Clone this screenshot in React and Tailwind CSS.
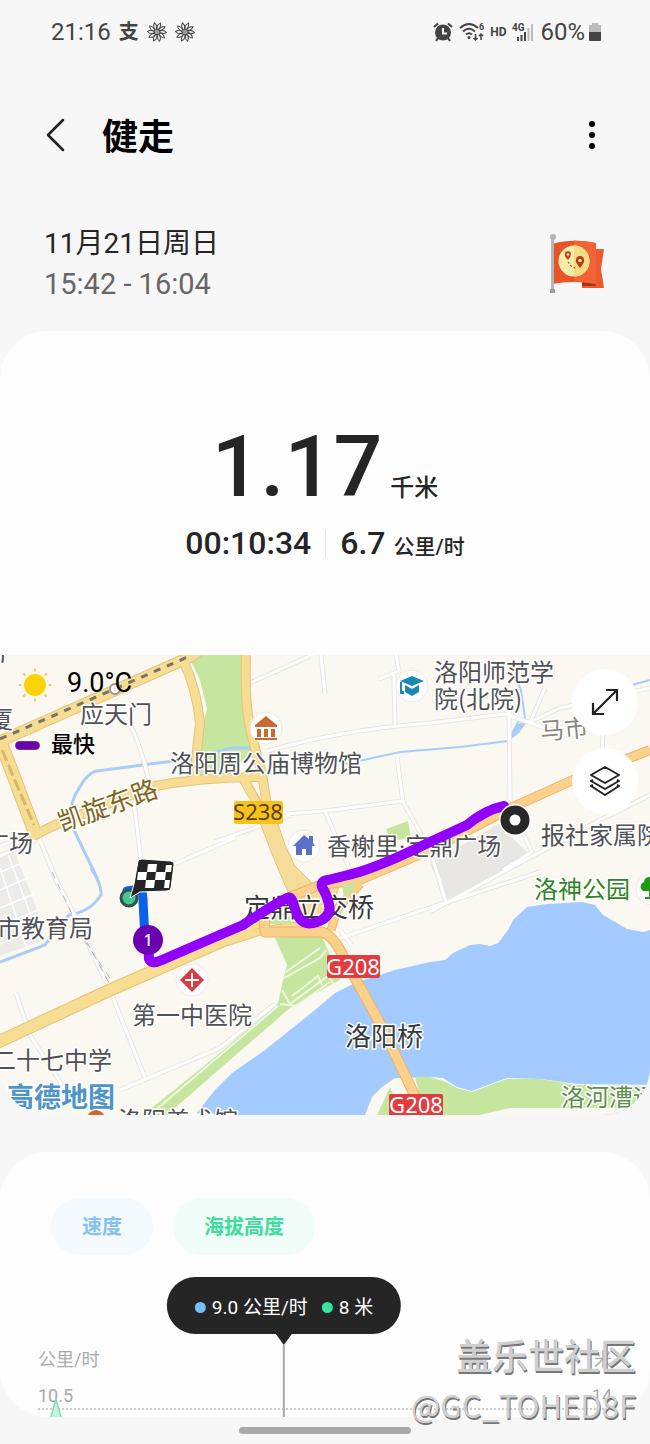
const ROADS_THIN = [
  'M120 706 L135 735 Q143 755 149 781 L134 803 Q138 835 141 862',
  'M39 838 L57 882 L70 906 L110 990 L145 1078',
  'M16 993 L30 1035 L62 1085',
  'M120 1090 L220 1048 L275 1004',
  'M250 683 L310 656',
  'M321 655 L325 694',
  'M396 655 L399 671 L379 679 M394 675 L395 726',
  'M268 751 Q340 730 430 723 L505 714 L545 728 L560 732',
  'M397 757 L403 802 L430 850 L446 902',
  'M286 814 L325 811 L402 801',
  'M325 811 L350 870',
  'M215 842 L290 815',
  'M509 712 L510 800',
  'M545 688 L529 725 M551 680 L553 667',
  'M530 722 L560 708 L580 704 L650 688',
  'M603 735 L602 755',
  'M430 912 L503 872 L600 820 L650 795',
  'M507 800 L532 852 L503 870',
  'M340 930 L352 946 M335 940 L420 911 L540 872',
  'M160 870 L235 838',
  'M0 846 L32 834 M0 856 L36 840',
]

const LABEL = "[font-family:'Noto_Sans_CJK_SC',sans-serif] [paint-order:stroke] stroke-white stroke-[3px] [stroke-linejoin:round]"

const PLACES = [
  { x: 80, y: 723, text: '应天门' },
  { x: -11, y: 728, text: '厦' },
  { x: 170, y: 772, text: '洛阳周公庙博物馆' },
  { x: 434, y: 681, text: '洛阳师范学' },
  { x: 434, y: 708, text: '院(北院)' },
  { x: 541, y: 844, text: '报社家属院' },
  { x: -15, y: 852, text: '广场' },
  { x: -3, y: 937, text: '市教育局' },
  { x: 132, y: 1024, text: '第一中医院' },
  { x: -8, y: 1069, text: '二十七中学' },
  { x: 118, y: 1129, text: '洛阳美术馆' },
]

function MapDrawing() {
  return (
    <svg viewBox="0 655 650 460" preserveAspectRatio="xMidYMid slice" className="block h-full w-full">
      <rect x="0" y="655" width="650" height="460" fill="#fbf8f2" />

      {/* building blocks */}
      <path d="M0 858 L14 850 L38 912 L44 940 L0 956Z" fill="#ecebe8" />
      <path d="M0 872 L20 864 M0 890 L28 878 M0 908 L34 894 M0 926 L38 910 M0 944 L42 926 M8 854 L40 940 M0 868 L26 946" stroke="#fff" strokeWidth="1.5" fill="none" />
      <path d="M430 864 L498 824 L528 853 L503 870 L446 901Z" fill="#e8e6e2" />

      {/* parks */}
      <g fill="#c6e6a0">
        <path d="M188 655 L241 655 Q242 690 249 735 L252 752 L228 775 L200 775 L202 728 L207 709 L200 680Z" />
        <path d="M386 829 L408 821 L411 838 L391 841Z" />
        <path d="M275 938 L320 933 L328 950 L340 980 L318 992 L290 1008 L215 1073 L167 1115 L143 1115 L220 1053 L278 1003 L283 980 L287 965Z" />
      </g>

      {/* river and canals */}
      <path
        d="M195 1115 L215 1090 L232 1073 L265 1050 L315 1010 L335 993 L355 983 L395 970 L430 962 L445 960 L453 953 L470 945 L480 944 L490 946 L498 943 L508 930 L513 920 L527 907 L547 904 L582 902 L595 905 L603 915 L617 923 L627 929 L643 932 L650 930 L650 1115Z"
        fill="#a3cbff"
      />
      <path d="M365 1115 L372 1097 L382 1087 L395 1078 L430 1077 L443 1078 L457 1087 L472 1091 L493 1083 L507 1078 L540 1079 L577 1084 L650 1085 L650 1115Z" fill="#fbf8f2" />
      <path d="M377 1115 L390 1087 L402 1115Z M415 1077 L430 1077 L446 1082 L457 1088 L472 1092 L493 1084 L507 1079 L540 1079 L577 1085 L650 1086 L650 1108 L510 1108 L480 1115 L425 1115Z" fill="#c6e6a0" />
      <g fill="none" stroke="#a9cdf8" strokeWidth="3">
        <path d="M98 880 L72 826 Q68 805 78 790 Q88 772 97 771 L150 764 L190 759 L232 748 L250 748" />
        <path d="M91 868 Q102 885 101 895 Q90 912 69 915 L45 945 L0 962" />
        <path d="M345 764 L400 752 L460 747 L508 741 L518 722 L525 718 L521 690 L510 665" strokeWidth="2" />
        <path d="M530 722 L548 712 M632 685 L650 680" strokeWidth="2" />
      </g>
      <path d="M510 740 L516 725 L529 719 L519 733Z" fill="#a9cdf8" />

      {/* minor streets */}
      <g fill="none">
        {ROADS_THIN.map(d => <path key={d} d={d} stroke="#e8e5df" strokeWidth="5" />)}
        {ROADS_THIN.map(d => <path key={d} d={d} stroke="#fff" strokeWidth="3" />)}
        <path d="M52 872 L72 914 L110 985 M84 940 L114 984 M80 997 L122 981" stroke="#b8b5b0" strokeWidth="1" strokeDasharray="7 6" />
      </g>
      <g fill="none" stroke="#eef7e2" strokeWidth="2">
        <path d="M286 972 L320 948 M282 990 L290 1004 L328 976 L334 984 M284 978 L320 958 L326 950 M292 996 L318 976 L322 985 M280 1004 L296 1006 L330 982 M158 1108 L278 1006" />
      </g>

      {/* main roads: casing first, then fill */}
      <g fill="none" strokeLinejoin="round">
        <g stroke="#e2c578">
          <path d="M-4 743 L190 657 L200 650" strokeWidth="12" />
          <path d="M0 740 L37 838" strokeWidth="14" />
          <path d="M33 836 L55 825 L150 787 Q200 777 262 777" strokeWidth="10" />
          <path d="M183 660 Q197 690 200 723 L194 778" strokeWidth="10" />
          <path d="M246 655 Q244 710 253 740 L262 775 L268 810" strokeWidth="10" />
          <path d="M243 778 L264 815" strokeWidth="10" />
          <path d="M-4 1043 L110 990 L220 942 L290 905" strokeWidth="13" />
          <path d="M215 946 L265 930 L300 925" strokeWidth="8" />
        </g>
        <g stroke="#f7dc94">
          <path d="M-4 743 L190 657 L200 650" strokeWidth="10" />
          <path d="M0 740 L37 838" strokeWidth="12" />
          <path d="M33 836 L55 825 L150 787 Q200 777 262 777" strokeWidth="8" />
          <path d="M183 660 Q197 690 200 723 L194 778" strokeWidth="8" />
          <path d="M246 655 Q244 710 253 740 L262 775 L268 812" strokeWidth="8" />
          <path d="M243 778 L264 817" strokeWidth="8" />
          <path d="M-4 1043 L110 990 L220 942 L290 905" strokeWidth="11" />
          <path d="M215 946 L265 930 L300 925" strokeWidth="6" />
        </g>
        <path d="M256 812 L272 806 L285 845 L295 866 L313 884 L340 884 L328 918 L300 920 L288 892 L272 854Z" fill="#f5dc98" stroke="#e2c578" strokeWidth="1" />
        <g stroke="#eab468">
          <path d="M290 897 L320 885 L360 880 L430 850 L513 807 L573 780 L650 750" strokeWidth="10" />
          <path d="M264 917 L265 932 L322 932 Q334 936 344 958 L382 1027 L424 1115" strokeWidth="11" />
          <path d="M360 884 L338 908 L331 930" strokeWidth="9" />
        </g>
        <g stroke="#fbd08a">
          <path d="M290 897 L320 885 L360 880 L430 850 L513 807 L573 780 L650 750" strokeWidth="8" />
          <path d="M264 917 L265 932 L322 932 Q334 936 344 958 L382 1027 L424 1115" strokeWidth="9" />
          <path d="M360 884 L338 908 L331 930" strokeWidth="7" />
        </g>
        <path d="M0 739 L190 656" stroke="#77736a" strokeWidth="3" strokeDasharray="7 7" />
        <path d="M2 750 L34 825" stroke="#d9b865" strokeWidth="3" strokeDasharray="12 4" />
      </g>
      <path d="M342 886 L356 882 L352 892 L344 897Z M270 924 L276 912 L287 908 L292 924Z" fill="#c6e6a0" />
      <circle cx="115" cy="689" r="5" fill="#fff" stroke="#999" strokeWidth="2" />

      {/* labels */}
      <g fontSize="24" fill="#505154" className={LABEL}>
        {PLACES.map(p => <text key={p.text} x={p.x} y={p.y}>{p.text}</text>)}
        <text x="327" y="855">香榭里<tspan className="[font-family:Roboto,sans-serif]">·</tspan>定鼎广场</text>
        <text x="0" y="662" transform="rotate(-12 0 662)">厂</text>
        <text x="541" y="740" fill="#8b8580" transform="rotate(-5 541 740)">马市</text>
        <text x="62" y="832" fontSize="26" fill="#80651c" transform="rotate(-20 62 832)">凯旋东路</text>
        <text x="534" y="898" fill="#2e8424">洛神公园</text>
        <text x="561" y="1106" fill="#5c8f4d">洛河漕运</text>
        <text x="244" y="917" fontSize="26" fill="#37383b">定鼎立交桥</text>
        <text x="345" y="1046" fontSize="26" fill="#37383b">洛阳桥</text>
        <text x="7" y="1107" fontSize="27" fill="#4d95c9" fontWeight="700">高德地图</text>
      </g>
      <g fontSize="22" className="[font-family:'Noto_Sans',sans-serif]" textAnchor="middle">
        <rect x="234" y="801" width="49" height="23" rx="2" fill="#f8c21c" />
        <text x="258" y="820" fill="#5a4408">S238</text>
        <rect x="327" y="955" width="53" height="23" rx="2" fill="#e23c40" />
        <text x="353" y="975" fill="#fff">G208</text>
        <rect x="389" y="1094" width="54" height="22" rx="2" fill="#e23c40" />
        <text x="416" y="1113" fill="#fff">G208</text>
      </g>

      {/* points of interest */}
      <g fill="#fff" stroke="#eee9e2">
        <circle cx="266" cy="728" r="16" />
        <circle cx="412" cy="686" r="16" />
        <circle cx="304" cy="846" r="16" />
        <circle cx="192" cy="980" r="16" />
        <circle cx="652" cy="889" r="16" />
      </g>
      <path d="M266 716 L277 725 V727 H255 V725Z M257 729 h4 v8 h-4Z M264 729 h4 v8 h-4Z M271 729 h4 v8 h-4Z M255 738 H277 V740 H255Z" fill="#c96a33" />
      <path d="M412 676 L424 681 L412 686 L400 681Z M405 685 L412 689 L419 685 V692 L412 696 L405 692Z M400 682 h2 v9 h2 v3 h-4Z" fill="#1a87b5" />
      <path d="M304 835 L309 839 V836 H313 V843 L315 846 H312 V855 H306 V849 H302 V855 H296 V846 H293Z" fill="#5b6fc9" />
      <path d="M192 968 L204 980 L192 992 L180 980Z" fill="#d63c44" />
      <path d="M192 973 V987 M185 980 H199" stroke="#fff" strokeWidth="2" />
      <path d="M652 878 a5 5 0 0 0 -8 4 a5 5 0 0 0 -1 9 h6 v6 h-4 v2 h8Z" fill="#1f9a10" />
      <circle cx="96" cy="1119" r="9" fill="#c96a33" />

      {/* walked route */}
      <g fill="none" strokeLinecap="round" strokeLinejoin="round" strokeWidth="9">
        <path d="M127 891 L140 889 Q143 892 143 900 L145 940" stroke="#0a62ea" />
        <path
          d="M148 942 L149 959 Q151 965 162 960 L215 937 L243 925 Q268 908 287 898 Q291 896 293 902 Q296 914 300 919 Q306 926 317 922 Q332 917 329 904 Q327 895 322 887 Q320 881 328 880 L348 875 Q375 869 430 842 L467 825 Q485 810 504 806"
          stroke="#9100fa"
          strokeWidth="10"
        />
      </g>
      <circle cx="129" cy="898" r="8" fill="#3ecb8e" stroke="#35504a" strokeWidth="3" />
      <path d="M138 861 Q139 859 142 859 L171 861 Q175 862 174 865 L171 888 Q170 891 167 891 L140 892 L130 898 L134 884Z" fill="#252525" stroke="#fff" strokeWidth="1" />
      <path d="M148 864 h9 l-1 8 h-9Z M166 865 h6 l-1 7 h-6Z M138 872 h9 l-1 8 h-9Z M156 872 h10 l-1 8 h-10Z M146 880 h9 l-1 8 h-9Z M165 880 h5 l-1 8 h-5Z" fill="#fff" />
      <circle cx="148" cy="940" r="15" fill="#6a00b0" />
      <text x="148" y="946" fontSize="16" fill="#fff" textAnchor="middle" className="font-medium [font-family:'Noto_Sans',sans-serif]">1</text>
      <circle cx="515" cy="820" r="16" fill="#fff" />
      <circle cx="515" cy="820" r="10" fill="#fff" stroke="#282828" strokeWidth="9" />
    </svg>
  )
}

function Flower() {
  return (
    <svg viewBox="-10 -10 20 20" className="size-5">
      {[0, 36, 72, 108, 144, 180, 216, 252, 288, 324].map(a => (
        <path key={a} d="M0 -2 Q-3 -6 1 -9.500 Q3 -6 0 -2" fill="none" stroke="#444" strokeWidth="1" transform={`rotate(${a + 15})`} />
      ))}
      <circle r="2" fill="#999" />
    </svg>
  )
}

function StatusBar() {
  return (
    <div className="flex h-16 items-center justify-between pr-[49px] pl-[51px] text-[#444]">
      <div className="flex items-center gap-2">
        <span className="text-2xl">21:16</span>
        <span className="text-xl font-bold">支</span>
        <Flower />
        <Flower />
      </div>
      <div className="flex items-center gap-[6px]">
        <svg viewBox="0 0 20 20" className="size-5" fill="none" stroke="#444">
          <circle cx="10" cy="10.500" r="8" fill="#444" stroke="none" />
          <path d="M1 5 L5 1.500 M19 5 L15 1.500 M5 16 L3 19 M15 16 L17 19" strokeWidth="2.200" />
          <path d="M10 6 V11.500 H14" stroke="#f7f7f7" strokeWidth="2" />
        </svg>
        <svg viewBox="0 0 25 20" className="h-5 w-[25px]" fill="none" stroke="#444" strokeWidth="2">
          <path d="M1 6 Q10 -2 19 6 M4 9.500 Q10 4 16 9.500 M7 12.500 Q10 10 13 12.500" />
          <circle cx="10" cy="15.500" r="1.500" fill="#444" stroke="none" />
          <path d="M16.500 12 V18 M14.500 16 L16.500 18 L18.500 16 M22 18 V12 M20 14 L22 12 L24 14" strokeWidth="1.500" />
          <text x="20" y="8" fontSize="9" fontWeight="700" fill="#444" stroke="none">6</text>
        </svg>
        <span className="text-xs font-bold">HD</span>
        <svg viewBox="0 0 22 20" className="h-5 w-[22px]">
          <text x="0" y="9" fontSize="10" fontWeight="700" fill="#444">4G</text>
          <path d="M5 15 h2 v4 h-2Z M8.500 13 h2 v6 h-2Z M12 10 h2 v9 h-2Z" fill="#444" />
          <path d="M15.500 6 h2 v13 h-2Z M19 2 h2 v17 h-2Z" fill="#bbb" />
        </svg>
        <div className="flex items-center gap-1">
          <span className="text-2xl">60%</span>
          <svg viewBox="0 0 12 20" className="h-5 w-3">
            <path d="M3 1 h6 v2 h3 v7 H0 V3 h3Z" fill="#bbb" />
            <path d="M0 10 h12 v8 q0 1 -1 1 H1 q-1 0 -1 -1Z" fill="#444" />
          </svg>
        </div>
      </div>
    </div>
  )
}

function FlagBadge() {
  return (
    <svg viewBox="0 0 56 60" className="h-[60px] w-14">
      <path d="M32 48 V54 H54 L51 35 L54 15 H44 V48Z" fill="#ee5a30" />
      <path d="M32 48 H46 V52 H32Z" fill="#a83516" />
      <path d="M2 10 Q22 4 46 9 V50 Q24 46 2 50Z" fill="#e85428" />
      <path d="M24 6.500 Q34 6.500 46 9 V50 Q35 47.500 24 47.500Z" fill="#f26236" />
      <circle cx="24" cy="27" r="15.500" fill="#f9ecac" />
      <path d="M24 11.500 a15.500 15.500 0 0 1 0 31Z" fill="#f3dc86" />
      <path d="M18 26 Q14 22 15 20 a3 3 0 0 1 6 0 Q21 23 18 26Z" fill="#c24a18" />
      <circle cx="18" cy="20.500" r="1.200" fill="#f9ecac" />
      <path d="M30 34 Q25 28 26 26 a4 4 0 0 1 8 0 Q35 28 30 34Z" fill="#b93a12" />
      <circle cx="30" cy="26.500" r="1.700" fill="#f9ecac" />
      <path d="M18 28 L21 32 L27 35" stroke="#c24a18" strokeWidth="1.200" strokeDasharray="2 2" fill="none" />
      <path d="M1 5 h3 v52 h-3Z" fill="#b5b5b5" />
      <circle cx="3" cy="3" r="3" fill="#b5b5b5" />
      <path d="M0 55 h5 v4 h-5Z" fill="#a0a0a0" />
    </svg>
  )
}

function MapButton({ label, children }) {
  return (
    <button type="button" aria-label={label} className="flex size-[66px] items-center justify-center rounded-full bg-white">
      {children}
    </button>
  )
}

export default function App() {
  return (
    <div className="relative min-h-screen overflow-hidden bg-[#f7f7f7] [font-family:Roboto,'Noto_Sans_CJK_SC',sans-serif] text-[#252525]">
      <StatusBar />

      <header className="flex h-36 items-center justify-between pr-12 pl-[42px]">
        <div className="flex items-center gap-8">
          <button type="button" aria-label="返回">
            <svg viewBox="0 0 28 36" className="h-9 w-7" fill="none" stroke="#222" strokeWidth="2.500" strokeLinecap="round" strokeLinejoin="round">
              <path d="M21 2 L6 17 L21 32" />
            </svg>
          </button>
          <h1 className="pt-1 text-4xl font-bold text-black">健走</h1>
        </div>
        <button type="button" aria-label="更多选项">
          <svg viewBox="0 0 20 32" className="h-8 w-5">
            <circle cx="10" cy="4" r="3" />
            <circle cx="10" cy="15" r="3" />
            <circle cx="10" cy="26" r="3" />
          </svg>
        </button>
      </header>

      <div className="flex items-center justify-between pt-4 pr-11 pb-[27px] pl-11 leading-10">
        <div>
          <p className="text-[28px]">11月21日周日</p>
          <p className="text-[29px] text-[#666]">15:42 - 16:04</p>
        </div>
        <FlagBadge />
      </div>

      <section className="overflow-hidden rounded-[48px] bg-[#fdfdfd]">
        <div className="pt-[93px] pb-[92px] font-medium">
          <p className="flex items-baseline justify-center gap-2">
            <span className="text-[86px] leading-[86px]">1.17</span>
            <span className="text-2xl leading-6">千米</span>
          </p>
          <div className="mt-[13px] flex h-10 items-center justify-center gap-[14px]">
            <span className="text-[32px] leading-10">00:10:34</span>
            <span className="h-7 w-px bg-[#e4e4e4]" />
            <p className="flex items-baseline gap-2">
              <span className="text-[32px] leading-10">6.7</span>
              <span className="text-[21px] leading-5">公里/时</span>
            </p>
          </div>
        </div>

        <div className="relative aspect-[65/46] w-full">
          <MapDrawing />
          <div className="absolute top-[10px] left-[15px] text-black">
            <div className="flex items-start gap-3">
              <svg viewBox="-20 -20 40 40" className="size-10">
                <circle r="11" fill="#fcd307" />
                {[0, 45, 90, 135, 180, 225, 270, 315].map(a => (
                  <path key={a} d="M0 -13.500 V-16.500" stroke="#f2cf4a" strokeWidth="2" transform={`rotate(${a})`} />
                ))}
              </svg>
              <span className="text-[27px] leading-9">9.0°C</span>
            </div>
            <div className="mt-6 flex items-center gap-[11px]">
              <span className="h-[9px] w-[25px] rounded-full border border-[#6b2f97] bg-[#6804a8]" />
              <span className="text-[22px] leading-8 font-medium">最快</span>
            </div>
          </div>
          <div className="absolute top-[14px] right-3 flex flex-col gap-[13px]">
            <MapButton label="展开地图">
              <svg viewBox="0 0 28 28" className="size-7" fill="none" stroke="#222" strokeWidth="2.200">
                <path d="M2 26 L26 2 M15 2 H26 V13 M2 15 V26 H13" />
              </svg>
            </MapButton>
            <MapButton label="地图图层">
              <svg viewBox="0 0 32 32" className="size-8" fill="none" stroke="#222" strokeWidth="2" strokeLinejoin="round">
                <path d="M16 2 L30 10 L16 18 L2 10Z M4 15 L2 16 L16 24 L30 16 L28 15 M4 20 L2 21 L16 30 L30 21 L28 20" />
              </svg>
            </MapButton>
          </div>
        </div>
      </section>

      <section className="mt-[37px] overflow-hidden rounded-[48px] bg-[#fdfdfd] pt-[46px]">
        <div className="flex gap-5 pl-[51px] text-xl font-bold">
          <button type="button" className="h-[57px] rounded-full bg-[#f4f9fd] px-[31px] text-[#84c3ed]">速度</button>
          <button type="button" className="h-[57px] rounded-full bg-[#effcf7] px-[31px] text-[#3fdb9f]">海拔高度</button>
        </div>

        <div className="relative pt-[91px] text-lg leading-7 text-[#aaa]">
          <div className="flex justify-between pr-[38px] pl-[38px]">
            <span>公里/时</span>
            <span>米</span>
          </div>
          <div className="mt-2 flex justify-between pr-[38px] pl-[38px]">
            <span>10.5</span>
            <span>14</span>
          </div>
          <div className="mx-[38px] -mt-[2px] h-[9px] border-t-2 border-dotted border-[#ccc]" />
          <svg viewBox="0 0 12 20" className="absolute bottom-0 left-[50px] h-5 w-3">
            <path d="M1 20 L6 2 L11 20" fill="#c9f3e0" stroke="#7fdcb3" strokeWidth="1.500" />
          </svg>
          <div className="absolute top-[22px] bottom-0 left-[284px] flex -translate-x-1/2 flex-col items-center">
            <div className="flex h-[57px] items-center gap-[14px] rounded-full bg-[#252525] px-7 pt-1 text-[19px] whitespace-nowrap text-white">
              <span className="flex items-center gap-[6px]">
                <span className="size-[11px] rounded-full bg-[#73bffc]" />
                9.0 公里/时
              </span>
              <span className="flex items-center gap-[6px]">
                <span className="size-[11px] rounded-full bg-[#36e3a0]" />
                8 米
              </span>
            </div>
            <svg viewBox="0 0 16 11" className="h-[11px] w-4">
              <path d="M0 0 H16 L8 11Z" fill="#252525" />
            </svg>
            <div className="w-[2px] flex-1 bg-[#aaa]" />
          </div>
        </div>
      </section>

      <div className="mx-auto mt-[10px] mb-[10px] h-[7px] w-[172px] rounded-full bg-[#a9a9a9]" />

      <div className="absolute right-[14px] bottom-4 text-right whitespace-nowrap text-[#cfcfcf] [text-shadow:1px_2px_0_#777]">
        <p className="text-4xl leading-[48px] font-medium">盖乐世社区</p>
        <p className="text-[31px] leading-[46px] [font-family:'Noto_Sans_CJK_SC',sans-serif]">@GC_TOHED8F</p>
      </div>
    </div>
  )
}
